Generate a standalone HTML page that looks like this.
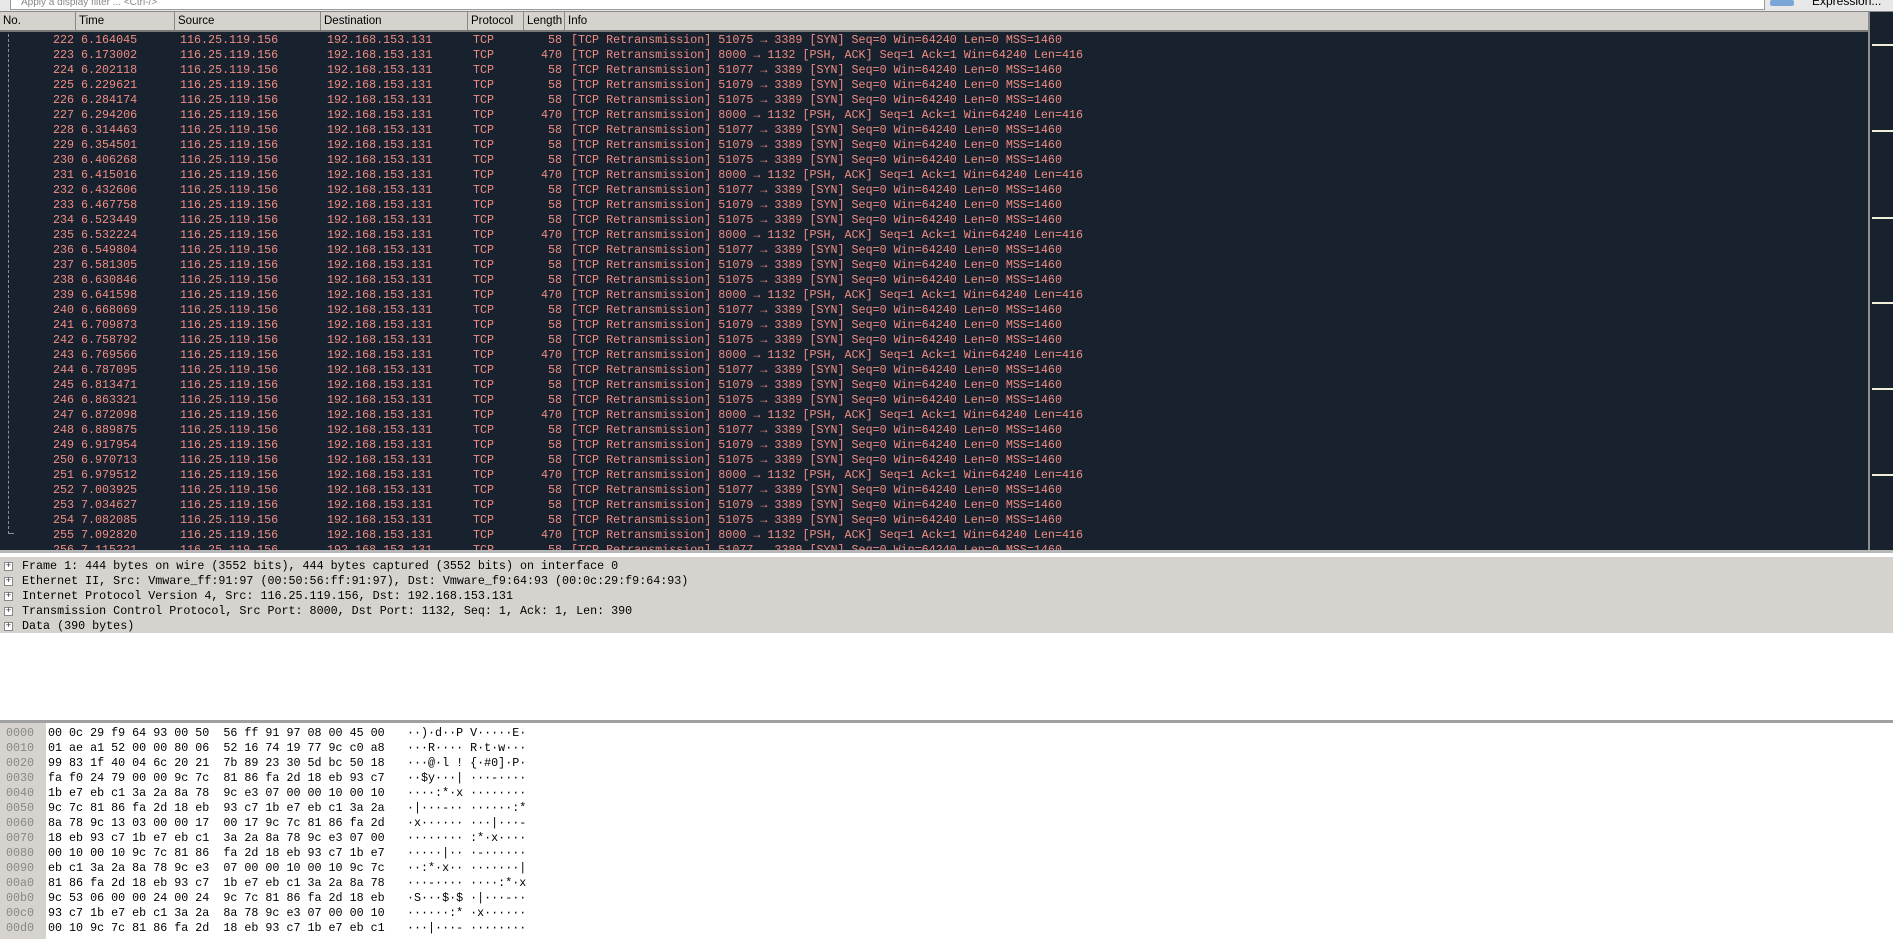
<!DOCTYPE html>
<html><head><meta charset="utf-8"><style>
*{margin:0;padding:0;box-sizing:border-box}
body{width:1893px;height:936px;overflow:hidden;background:#fff;font-family:"Liberation Mono",monospace;font-size:11.7px;position:relative}
#top{position:absolute;left:0;top:0;width:1893px;height:12px;background:#e8e8e8;border-bottom:1px solid #888}
#top .f{position:absolute;left:10px;top:0;width:1755px;height:10px;background:#fff;border:1px solid #999;border-top:none;font-family:"Liberation Sans",sans-serif;font-size:10px;line-height:6px;color:#888;padding-left:10px}
#top .b{position:absolute;left:1770px;top:0;width:24px;height:6px;background:#7aa7d8;border-radius:2px}
#top .e{position:absolute;left:1812px;top:-6px;font-family:"Liberation Sans",sans-serif;font-size:12px}
#hdr{position:absolute;left:0;top:12px;width:1868px;height:20px;background:#d6d3ce;border-bottom:2px solid #777;font-family:"Liberation Sans",sans-serif;font-size:11.5px}
#hdr span{position:absolute;top:0;height:18px;line-height:18px;padding-left:3px;border-right:1px solid #888}
#list{position:absolute;left:0;top:32px;width:1868px;height:518px;background:#18222f;overflow:hidden;border-left:1px dashed transparent}
#tree{position:absolute;left:8px;top:34px;height:500px;border-left:1px dashed #8a8f98}
#tree2{position:absolute;left:8px;top:533px;width:6px;border-top:1px solid #8a8f98}
.r{position:relative;height:15px;line-height:15px;color:#ef8c82;white-space:pre}
.r span{position:absolute;top:0}
.r span:nth-child(1){right:1794px}
.r span:nth-child(2){left:80px}
.r span:nth-child(3){left:179px}
.r span:nth-child(4){left:326px}
.r span:nth-child(5){left:472px}
.r span:nth-child(6){right:1306px}
.r span:nth-child(7){left:570px}
#sb{position:absolute;left:1868px;top:12px;width:25px;height:538px;background:#18222f;border-left:2px solid #8d8d8d}
#sb i{position:absolute;left:2px;width:23px;height:2px;background:#f0f0d8}
#det{position:absolute;left:0;top:550px;width:1893px;height:170px;background:#fff;border-top:3px solid #b8b8b8}
#det .g{position:absolute;left:0;top:4px;width:1893px;height:76px;background:#d6d3ce}
.d{position:absolute;left:22px;height:15px;line-height:15px;color:#000;white-space:pre}
.pb{position:absolute;left:4px;width:9px;height:9px;border:1px solid #888;background:#fff;font-size:9px;line-height:7px;text-align:center;color:#333}
#hex{position:absolute;left:0;top:720px;width:1893px;height:216px;background:#fff;border-top:3px solid #a0a0a0}
#hex .o{position:absolute;left:0;top:0;width:46px;height:216px;background:#d6d3ce}
.h{position:absolute;height:15px;line-height:15px;white-space:pre}
</style></head><body>
<div id="top"><div class="f">Apply a display filter ... &lt;Ctrl-/&gt;</div><div class="b"></div><div class="e">Expression...</div></div>
<div id="hdr">
<span style="left:0;width:76px">No.</span><span style="left:76px;width:99px">Time</span><span style="left:175px;width:146px">Source</span><span style="left:321px;width:147px">Destination</span><span style="left:468px;width:56px">Protocol</span><span style="left:524px;width:41px">Length</span><span style="left:565px;width:1303px;border-right:none">Info</span>
</div>
<div id="list" style="padding-top:1px">
<div class="r"><span>222</span><span>6.164045</span><span>116.25.119.156</span><span>192.168.153.131</span><span>TCP</span><span>58</span><span>[TCP Retransmission] 51075 → 3389 [SYN] Seq=0 Win=64240 Len=0 MSS=1460</span></div>
<div class="r"><span>223</span><span>6.173002</span><span>116.25.119.156</span><span>192.168.153.131</span><span>TCP</span><span>470</span><span>[TCP Retransmission] 8000 → 1132 [PSH, ACK] Seq=1 Ack=1 Win=64240 Len=416</span></div>
<div class="r"><span>224</span><span>6.202118</span><span>116.25.119.156</span><span>192.168.153.131</span><span>TCP</span><span>58</span><span>[TCP Retransmission] 51077 → 3389 [SYN] Seq=0 Win=64240 Len=0 MSS=1460</span></div>
<div class="r"><span>225</span><span>6.229621</span><span>116.25.119.156</span><span>192.168.153.131</span><span>TCP</span><span>58</span><span>[TCP Retransmission] 51079 → 3389 [SYN] Seq=0 Win=64240 Len=0 MSS=1460</span></div>
<div class="r"><span>226</span><span>6.284174</span><span>116.25.119.156</span><span>192.168.153.131</span><span>TCP</span><span>58</span><span>[TCP Retransmission] 51075 → 3389 [SYN] Seq=0 Win=64240 Len=0 MSS=1460</span></div>
<div class="r"><span>227</span><span>6.294206</span><span>116.25.119.156</span><span>192.168.153.131</span><span>TCP</span><span>470</span><span>[TCP Retransmission] 8000 → 1132 [PSH, ACK] Seq=1 Ack=1 Win=64240 Len=416</span></div>
<div class="r"><span>228</span><span>6.314463</span><span>116.25.119.156</span><span>192.168.153.131</span><span>TCP</span><span>58</span><span>[TCP Retransmission] 51077 → 3389 [SYN] Seq=0 Win=64240 Len=0 MSS=1460</span></div>
<div class="r"><span>229</span><span>6.354501</span><span>116.25.119.156</span><span>192.168.153.131</span><span>TCP</span><span>58</span><span>[TCP Retransmission] 51079 → 3389 [SYN] Seq=0 Win=64240 Len=0 MSS=1460</span></div>
<div class="r"><span>230</span><span>6.406268</span><span>116.25.119.156</span><span>192.168.153.131</span><span>TCP</span><span>58</span><span>[TCP Retransmission] 51075 → 3389 [SYN] Seq=0 Win=64240 Len=0 MSS=1460</span></div>
<div class="r"><span>231</span><span>6.415016</span><span>116.25.119.156</span><span>192.168.153.131</span><span>TCP</span><span>470</span><span>[TCP Retransmission] 8000 → 1132 [PSH, ACK] Seq=1 Ack=1 Win=64240 Len=416</span></div>
<div class="r"><span>232</span><span>6.432606</span><span>116.25.119.156</span><span>192.168.153.131</span><span>TCP</span><span>58</span><span>[TCP Retransmission] 51077 → 3389 [SYN] Seq=0 Win=64240 Len=0 MSS=1460</span></div>
<div class="r"><span>233</span><span>6.467758</span><span>116.25.119.156</span><span>192.168.153.131</span><span>TCP</span><span>58</span><span>[TCP Retransmission] 51079 → 3389 [SYN] Seq=0 Win=64240 Len=0 MSS=1460</span></div>
<div class="r"><span>234</span><span>6.523449</span><span>116.25.119.156</span><span>192.168.153.131</span><span>TCP</span><span>58</span><span>[TCP Retransmission] 51075 → 3389 [SYN] Seq=0 Win=64240 Len=0 MSS=1460</span></div>
<div class="r"><span>235</span><span>6.532224</span><span>116.25.119.156</span><span>192.168.153.131</span><span>TCP</span><span>470</span><span>[TCP Retransmission] 8000 → 1132 [PSH, ACK] Seq=1 Ack=1 Win=64240 Len=416</span></div>
<div class="r"><span>236</span><span>6.549804</span><span>116.25.119.156</span><span>192.168.153.131</span><span>TCP</span><span>58</span><span>[TCP Retransmission] 51077 → 3389 [SYN] Seq=0 Win=64240 Len=0 MSS=1460</span></div>
<div class="r"><span>237</span><span>6.581305</span><span>116.25.119.156</span><span>192.168.153.131</span><span>TCP</span><span>58</span><span>[TCP Retransmission] 51079 → 3389 [SYN] Seq=0 Win=64240 Len=0 MSS=1460</span></div>
<div class="r"><span>238</span><span>6.630846</span><span>116.25.119.156</span><span>192.168.153.131</span><span>TCP</span><span>58</span><span>[TCP Retransmission] 51075 → 3389 [SYN] Seq=0 Win=64240 Len=0 MSS=1460</span></div>
<div class="r"><span>239</span><span>6.641598</span><span>116.25.119.156</span><span>192.168.153.131</span><span>TCP</span><span>470</span><span>[TCP Retransmission] 8000 → 1132 [PSH, ACK] Seq=1 Ack=1 Win=64240 Len=416</span></div>
<div class="r"><span>240</span><span>6.668069</span><span>116.25.119.156</span><span>192.168.153.131</span><span>TCP</span><span>58</span><span>[TCP Retransmission] 51077 → 3389 [SYN] Seq=0 Win=64240 Len=0 MSS=1460</span></div>
<div class="r"><span>241</span><span>6.709873</span><span>116.25.119.156</span><span>192.168.153.131</span><span>TCP</span><span>58</span><span>[TCP Retransmission] 51079 → 3389 [SYN] Seq=0 Win=64240 Len=0 MSS=1460</span></div>
<div class="r"><span>242</span><span>6.758792</span><span>116.25.119.156</span><span>192.168.153.131</span><span>TCP</span><span>58</span><span>[TCP Retransmission] 51075 → 3389 [SYN] Seq=0 Win=64240 Len=0 MSS=1460</span></div>
<div class="r"><span>243</span><span>6.769566</span><span>116.25.119.156</span><span>192.168.153.131</span><span>TCP</span><span>470</span><span>[TCP Retransmission] 8000 → 1132 [PSH, ACK] Seq=1 Ack=1 Win=64240 Len=416</span></div>
<div class="r"><span>244</span><span>6.787095</span><span>116.25.119.156</span><span>192.168.153.131</span><span>TCP</span><span>58</span><span>[TCP Retransmission] 51077 → 3389 [SYN] Seq=0 Win=64240 Len=0 MSS=1460</span></div>
<div class="r"><span>245</span><span>6.813471</span><span>116.25.119.156</span><span>192.168.153.131</span><span>TCP</span><span>58</span><span>[TCP Retransmission] 51079 → 3389 [SYN] Seq=0 Win=64240 Len=0 MSS=1460</span></div>
<div class="r"><span>246</span><span>6.863321</span><span>116.25.119.156</span><span>192.168.153.131</span><span>TCP</span><span>58</span><span>[TCP Retransmission] 51075 → 3389 [SYN] Seq=0 Win=64240 Len=0 MSS=1460</span></div>
<div class="r"><span>247</span><span>6.872098</span><span>116.25.119.156</span><span>192.168.153.131</span><span>TCP</span><span>470</span><span>[TCP Retransmission] 8000 → 1132 [PSH, ACK] Seq=1 Ack=1 Win=64240 Len=416</span></div>
<div class="r"><span>248</span><span>6.889875</span><span>116.25.119.156</span><span>192.168.153.131</span><span>TCP</span><span>58</span><span>[TCP Retransmission] 51077 → 3389 [SYN] Seq=0 Win=64240 Len=0 MSS=1460</span></div>
<div class="r"><span>249</span><span>6.917954</span><span>116.25.119.156</span><span>192.168.153.131</span><span>TCP</span><span>58</span><span>[TCP Retransmission] 51079 → 3389 [SYN] Seq=0 Win=64240 Len=0 MSS=1460</span></div>
<div class="r"><span>250</span><span>6.970713</span><span>116.25.119.156</span><span>192.168.153.131</span><span>TCP</span><span>58</span><span>[TCP Retransmission] 51075 → 3389 [SYN] Seq=0 Win=64240 Len=0 MSS=1460</span></div>
<div class="r"><span>251</span><span>6.979512</span><span>116.25.119.156</span><span>192.168.153.131</span><span>TCP</span><span>470</span><span>[TCP Retransmission] 8000 → 1132 [PSH, ACK] Seq=1 Ack=1 Win=64240 Len=416</span></div>
<div class="r"><span>252</span><span>7.003925</span><span>116.25.119.156</span><span>192.168.153.131</span><span>TCP</span><span>58</span><span>[TCP Retransmission] 51077 → 3389 [SYN] Seq=0 Win=64240 Len=0 MSS=1460</span></div>
<div class="r"><span>253</span><span>7.034627</span><span>116.25.119.156</span><span>192.168.153.131</span><span>TCP</span><span>58</span><span>[TCP Retransmission] 51079 → 3389 [SYN] Seq=0 Win=64240 Len=0 MSS=1460</span></div>
<div class="r"><span>254</span><span>7.082085</span><span>116.25.119.156</span><span>192.168.153.131</span><span>TCP</span><span>58</span><span>[TCP Retransmission] 51075 → 3389 [SYN] Seq=0 Win=64240 Len=0 MSS=1460</span></div>
<div class="r"><span>255</span><span>7.092820</span><span>116.25.119.156</span><span>192.168.153.131</span><span>TCP</span><span>470</span><span>[TCP Retransmission] 8000 → 1132 [PSH, ACK] Seq=1 Ack=1 Win=64240 Len=416</span></div>
<div class="r"><span>256</span><span>7.115221</span><span>116.25.119.156</span><span>192.168.153.131</span><span>TCP</span><span>58</span><span>[TCP Retransmission] 51077 → 3389 [SYN] Seq=0 Win=64240 Len=0 MSS=1460</span></div>
</div>
<div id="tree"></div><div id="tree2"></div>
<div id="sb"><i style="top:32px"></i><i style="top:118px"></i><i style="top:205px"></i><i style="top:290px"></i><i style="top:376px"></i><i style="top:462px"></i></div>
<div id="det"><div class="g"></div>
<div class="pb" style="top:9px">+</div><div class="d" style="top:6px">Frame 1: 444 bytes on wire (3552 bits), 444 bytes captured (3552 bits) on interface 0</div>
<div class="pb" style="top:24px">+</div><div class="d" style="top:21px">Ethernet II, Src: Vmware_ff:91:97 (00:50:56:ff:91:97), Dst: Vmware_f9:64:93 (00:0c:29:f9:64:93)</div>
<div class="pb" style="top:39px">+</div><div class="d" style="top:36px">Internet Protocol Version 4, Src: 116.25.119.156, Dst: 192.168.153.131</div>
<div class="pb" style="top:54px">+</div><div class="d" style="top:51px">Transmission Control Protocol, Src Port: 8000, Dst Port: 1132, Seq: 1, Ack: 1, Len: 390</div>
<div class="pb" style="top:69px">+</div><div class="d" style="top:66px">Data (390 bytes)</div>
</div>
<div id="hex"><div class="o"></div>
<div class="h" style="left:6px;top:3px;color:#888">0000<br>0010<br>0020<br>0030<br>0040<br>0050<br>0060<br>0070<br>0080<br>0090<br>00a0<br>00b0<br>00c0<br>00d0</div>
<div class="h" style="left:48px;top:3px">00 0c 29 f9 64 93 00 50  56 ff 91 97 08 00 45 00<br>01 ae a1 52 00 00 80 06  52 16 74 19 77 9c c0 a8<br>99 83 1f 40 04 6c 20 21  7b 89 23 30 5d bc 50 18<br>fa f0 24 79 00 00 9c 7c  81 86 fa 2d 18 eb 93 c7<br>1b e7 eb c1 3a 2a 8a 78  9c e3 07 00 00 10 00 10<br>9c 7c 81 86 fa 2d 18 eb  93 c7 1b e7 eb c1 3a 2a<br>8a 78 9c 13 03 00 00 17  00 17 9c 7c 81 86 fa 2d<br>18 eb 93 c7 1b e7 eb c1  3a 2a 8a 78 9c e3 07 00<br>00 10 00 10 9c 7c 81 86  fa 2d 18 eb 93 c7 1b e7<br>eb c1 3a 2a 8a 78 9c e3  07 00 00 10 00 10 9c 7c<br>81 86 fa 2d 18 eb 93 c7  1b e7 eb c1 3a 2a 8a 78<br>9c 53 06 00 00 24 00 24  9c 7c 81 86 fa 2d 18 eb<br>93 c7 1b e7 eb c1 3a 2a  8a 78 9c e3 07 00 00 10<br>00 10 9c 7c 81 86 fa 2d  18 eb 93 c7 1b e7 eb c1</div>
<div class="h" style="left:407px;top:3px">··)·d··P V·····E·<br>···R···· R·t·w···<br>···@·l ! {·#0]·P·<br>··$y···| ···-····<br>····:*·x ········<br>·|···-·· ······:*<br>·x······ ···|···-<br>········ :*·x····<br>·····|·· ·-······<br>··:*·x·· ·······|<br>···-···· ····:*·x<br>·S···$·$ ·|···-··<br>······:* ·x······<br>···|···- ········</div>
</div>
</body></html>
